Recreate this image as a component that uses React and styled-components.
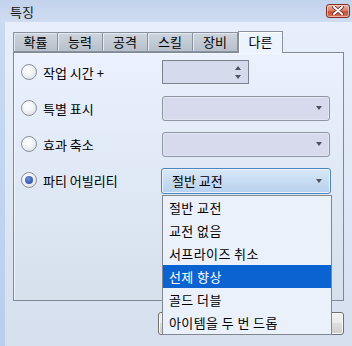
import React from "react";
import styled, { createGlobalStyle } from "styled-components";

const GlobalStyle = createGlobalStyle`
  html, body { margin: 0; padding: 0; }
  body {
    font-family: "Noto Sans CJK KR", "Noto Sans", sans-serif;
    font-size: 13px;
    color: #000;
    background: #dbe5f3;
  }
  * { box-sizing: border-box; }
`;

const Window = styled.div`
  position: relative;
  width: 352px;
  height: 346px;
  display: flex;
  flex-direction: column;
  overflow: hidden;
  background: #dbe5f3;
`;

const TitleBar = styled.div`
  height: 22px;
  flex: none;
  display: flex;
  align-items: center;
  justify-content: space-between;
  padding: 0 2px 0 10px;
  background: linear-gradient(#c2d3ec, #cfdcf1);
`;

const Title = styled.span`
  font-size: 13px;
  line-height: 1;
  color: #111;
  padding-top: 1px;
`;

const CloseButton = styled.div`
  width: 24px;
  height: 14px;
  margin-top: -1px;
  border: 1px solid #7d2f27;
  border-radius: 3px;
  background: linear-gradient(#e9b2a4 0%, #d9826e 45%, #c4503b 55%, #d8745c 100%);
  box-shadow: inset 0 0 0 1px rgba(255, 220, 210, 0.6);
  display: flex;
  align-items: center;
  justify-content: center;
`;

const Body = styled.div`
  flex: 1;
  display: flex;
`;

const LeftEdge = styled.div`
  width: 5px;
  flex: none;
  background: linear-gradient(#c9daf2, #b8cfee);
`;

const Main = styled.div`
  flex: 1;
  display: flex;
  flex-direction: column;
  padding: 9px 8px 0 8px;
  background: linear-gradient(#e8effc 0%, #dfe8f6 50%, #d5dfee 100%);
`;

const TabBar = styled.div`
  height: 21px;
  display: flex;
  align-items: flex-end;
  position: relative;
  z-index: 1;
`;

const Tab = styled.div`
  width: 45px;
  height: ${(p) => (p.$active ? "22px" : "20px")};
  margin-bottom: ${(p) => (p.$active ? "-1px" : "0")};
  display: flex;
  align-items: center;
  justify-content: center;
  padding-bottom: ${(p) => (p.$active ? "2px" : "1px")};
  font-size: 13px;
  border: 1px solid #89929e;
  border-bottom: ${(p) => (p.$active ? "none" : "1px solid #89929e")};
  border-left: ${(p) => (p.$first || p.$active ? "1px solid #89929e" : "none")};
  background: ${(p) =>
    p.$active ? "#edf3fd" : "linear-gradient(#cdd4dd, #b7c0cb)"};
  box-shadow: inset 1px 1px 0 ${(p) => (p.$active ? "#ffffff" : "#e4e9ef")};
`;

const Panel = styled.div`
  height: 249px;
  border: 1px solid #7f8996;
  box-shadow: inset 1px 1px 0 #f4f8fe;
  background: linear-gradient(#ebf1fd 0%, #e2eaf8 40%, #d6e0ec 100%);
  padding-top: 1px;
  display: flex;
  flex-direction: column;
`;

const Row = styled.div`
  height: 36px;
  display: grid;
  grid-template-columns: 141px auto;
  align-items: center;
  padding-left: 7px;
`;

const OptionLabel = styled.label`
  display: flex;
  align-items: center;
  gap: 6px;
  font-size: 13px;
  line-height: 1;
`;

const Radio = styled.span`
  width: 16px;
  height: 16px;
  border-radius: 50%;
  border: 1px solid #8b9199;
  background: radial-gradient(circle at 40% 35%, #ffffff 0%, #f3f5f8 40%, #d4d9e0 100%);
  display: flex;
  align-items: center;
  justify-content: center;
  &::after {
    content: "";
    width: 8px;
    height: 8px;
    border-radius: 50%;
    display: ${(p) => (p.$checked ? "block" : "none")};
    background: radial-gradient(circle at 40% 35%, #6f90d6 0%, #3a5fb4 60%, #2c4c9c 100%);
  }
`;

const SpinBox = styled.div`
  width: 87px;
  height: 24px;
  border: 1px solid #7c828c;
  background: #d6daed;
  display: flex;
  justify-content: flex-end;
`;

const SpinArrows = styled.div`
  width: 14px;
  display: flex;
  flex-direction: column;
  align-items: center;
  justify-content: space-between;
  padding: 5px 0 4px;
  margin-right: 3px;
`;

const Triangle = styled.span`
  width: 0;
  height: 0;
  border-left: 3px solid transparent;
  border-right: 3px solid transparent;
  ${(p) =>
    p.$up
      ? "border-bottom: 4px solid #4d535c;"
      : "border-top: 4px solid #4d535c;"}
`;

const Select = styled.div`
  width: 168px;
  height: 25px;
  border: 1px solid #8e96a3;
  border-radius: 3px;
  background: #d6daec;
  box-shadow: inset 0 0 0 1px #e2e5f2;
  display: flex;
  align-items: center;
  justify-content: flex-end;
  padding-right: 7px;
`;

const SelectWrap = styled.div`
  position: relative;
  margin-left: -1px;
  margin-top: 1px;
`;

const FocusedSelect = styled.div`
  width: 170px;
  height: 26px;
  border: 1px solid #4c86bf;
  border-radius: 3px;
  background: linear-gradient(#d9e8f8 0%, #c8dcf2 50%, #b7d1ee 100%);
  box-shadow: inset 0 0 0 1px #eaf3fd;
  display: flex;
  align-items: center;
  justify-content: space-between;
  padding: 0 8px 0 10px;
  font-size: 13px;
`;

const DropList = styled.ul`
  position: absolute;
  top: 27px;
  left: 1px;
  width: 170px;
  margin: 0;
  padding: 0;
  list-style: none;
  border: 1px solid #83888f;
  background: #eaf1fb;
  z-index: 5;
`;

const DropItem = styled.li`
  height: 23px;
  display: flex;
  align-items: center;
  padding-left: 6px;
  font-size: 13px;
  letter-spacing: 0.4px;
  color: ${(p) => (p.$selected ? "#ffffff" : "#000000")};
  background: ${(p) => (p.$selected ? "#0b63d2" : "transparent")};
`;

const Footer = styled.div`
  display: flex;
  justify-content: flex-end;
  gap: 11px;
  padding-top: 11px;
`;

const Button = styled.div`
  width: ${(p) => p.$w}px;
  height: 23px;
  border: 1px solid #707070;
  border-radius: 3px;
  background: linear-gradient(#f2f2f2 0%, #ebebeb 45%, #dddddd 50%, #cfcfcf 100%);
  box-shadow: inset 0 0 0 1px #fbfbfb;
`;

const Arrow = () => <Triangle />;

const tabs = ["확률", "능력", "공격", "스킬", "장비", "다른"];
const items = ["절반 교전", "교전 없음", "서프라이즈 취소", "선제 향상", "골드 더블", "아이템을 두 번 드롭"];

export default function App() {
  return (
    <>
      <GlobalStyle />
      <Window>
        <TitleBar>
          <Title>특징</Title>
          <CloseButton>
            <svg width="12" height="9" viewBox="0 0 12 9">
              <path d="M2 1 L10 8 M10 1 L2 8" stroke="#5a1d16" strokeWidth="3.4" strokeLinecap="round" />
              <path d="M2 1 L10 8 M10 1 L2 8" stroke="#ffffff" strokeWidth="2" strokeLinecap="round" />
            </svg>
          </CloseButton>
        </TitleBar>
        <Body>
          <LeftEdge />
          <Main>
            <TabBar>
              {tabs.map((t, i) => (
                <Tab key={t} $first={i === 0} $active={i === tabs.length - 1}>
                  {t}
                </Tab>
              ))}
            </TabBar>
            <Panel>
              <Row>
                <OptionLabel>
                  <Radio />
                  작업 시간 +
                </OptionLabel>
                <SpinBox>
                  <SpinArrows>
                    <Triangle $up />
                    <Triangle />
                  </SpinArrows>
                </SpinBox>
              </Row>
              <Row>
                <OptionLabel>
                  <Radio />
                  특별 표시
                </OptionLabel>
                <Select>
                  <Arrow />
                </Select>
              </Row>
              <Row>
                <OptionLabel>
                  <Radio />
                  효과 축소
                </OptionLabel>
                <Select>
                  <Arrow />
                </Select>
              </Row>
              <Row>
                <OptionLabel>
                  <Radio $checked />
                  파티 어빌리티
                </OptionLabel>
                <SelectWrap>
                  <FocusedSelect>
                    <span>절반 교전</span>
                    <Triangle />
                  </FocusedSelect>
                  <DropList>
                    {items.map((it) => (
                      <DropItem key={it} $selected={it === "선제 향상"}>
                        {it}
                      </DropItem>
                    ))}
                  </DropList>
                </SelectWrap>
              </Row>
            </Panel>
            <Footer>
              <Button $w={88} />
              <Button $w={87} />
            </Footer>
          </Main>
        </Body>
      </Window>
    </>
  );
}
